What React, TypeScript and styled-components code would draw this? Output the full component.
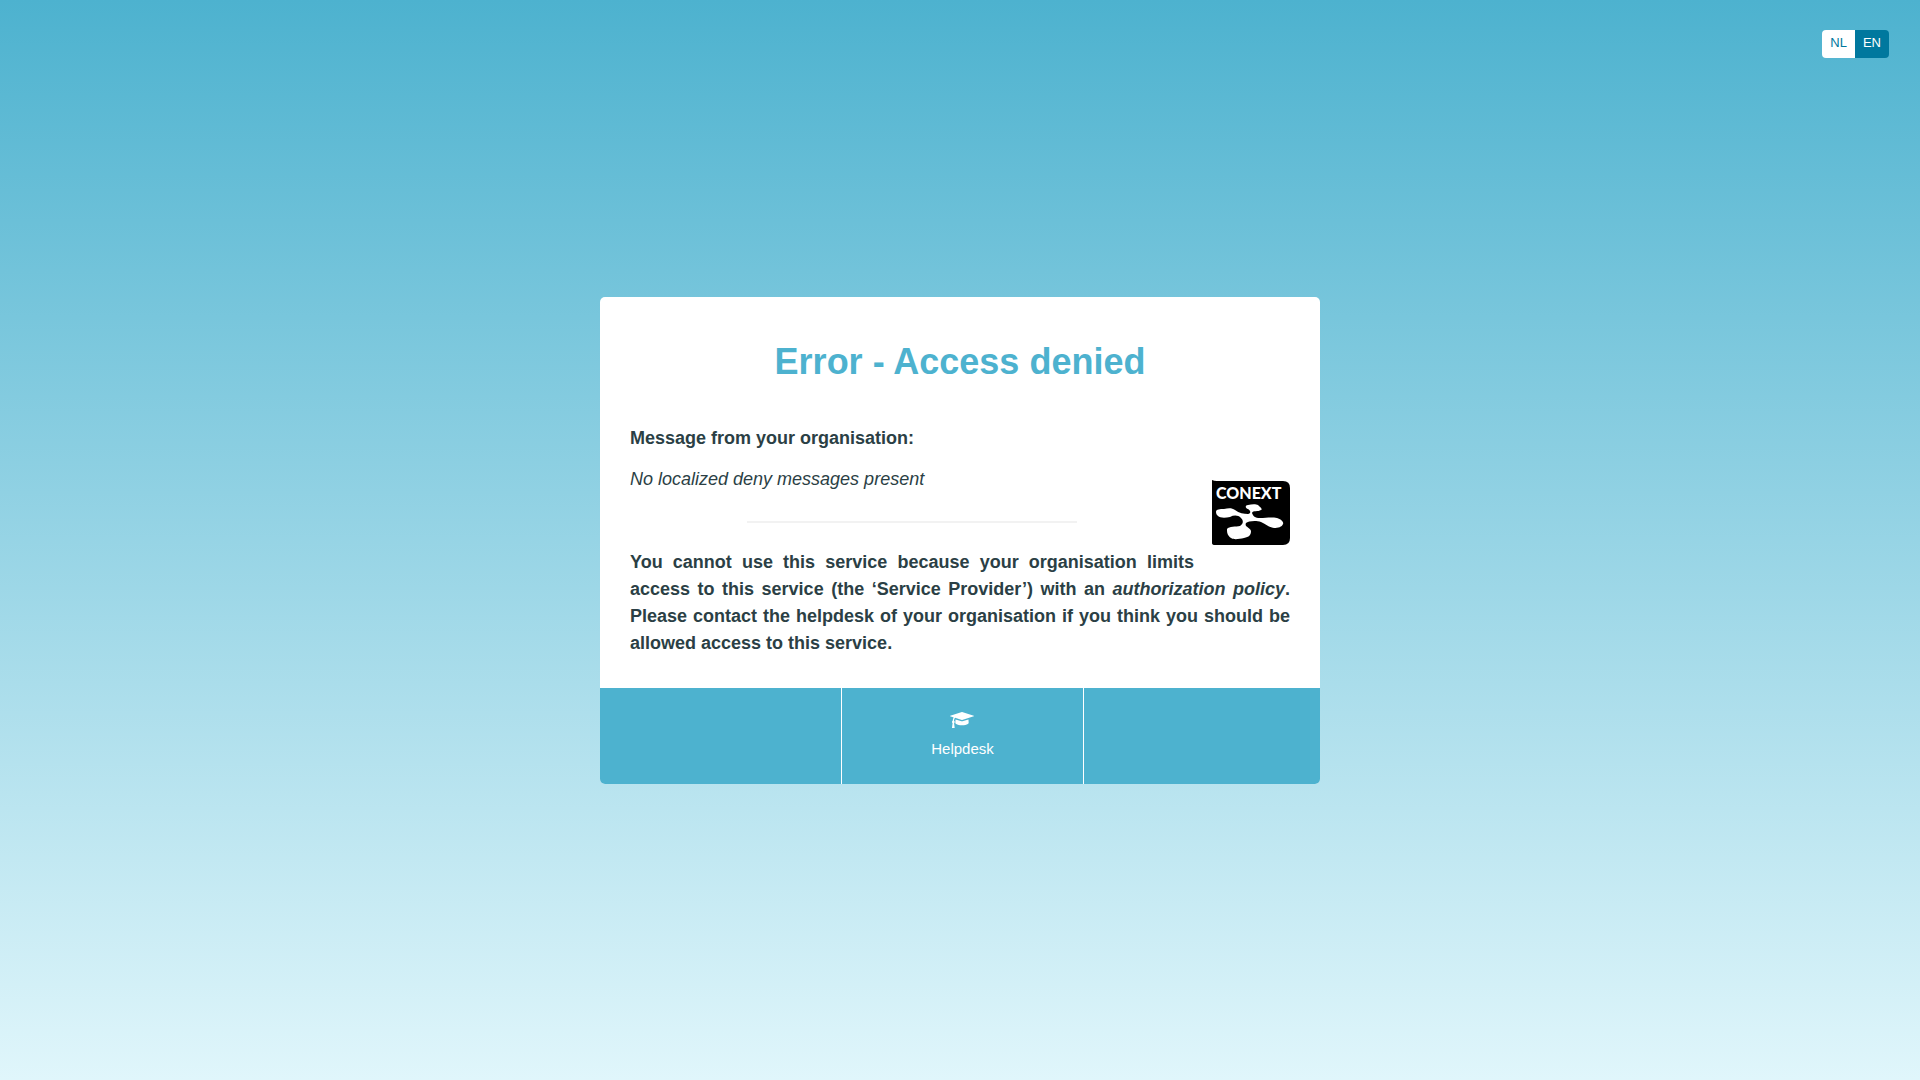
import React from 'react';
import styled, { createGlobalStyle } from 'styled-components';

const GlobalStyle = createGlobalStyle`
  *, *::before, *::after { box-sizing: border-box; }
  body {
    margin: 0;
    color: #2b3f45;
    font-family: Helvetica, "Liberation Sans", Arial, sans-serif;
    font-size: 18px;
    line-height: 27px;
  }
`;

const Page = styled.div`
  display: grid;
  grid-template-rows: 1fr auto 1fr;
  min-height: 100vh;
  background: linear-gradient(to bottom, #4db2cf 0%, #e0f6fb 100%);
`;

const LanguageBar = styled.nav`
  display: flex;
  justify-content: flex-end;
  align-items: flex-start;
  padding: 30px 31px;
`;

const LanguageList = styled.div`
  display: flex;
  overflow: hidden;
  border-radius: 4px;
`;

const LanguageLink = styled.a<{ $active?: boolean }>`
  padding: 0 8px 2px;
  font-size: 13px;
  line-height: 26px;
  text-decoration: none;
  color: ${(p) => (p.$active ? '#fff' : '#00789e')};
  background: ${(p) => (p.$active ? '#00789e' : '#fff')};
`;

const Card = styled.main`
  width: 100%;
  max-width: 720px;
  margin: 0 auto;
  overflow: hidden;
  border-radius: 5px;
  background: #fff;
`;

const Content = styled.div`
  padding: 38px 30px 31px;
`;

const Title = styled.h1`
  margin: 0 0 36px;
  font-size: 36px;
  line-height: 54px;
  text-align: center;
  color: #4db2cf;
`;

const Subtitle = styled.h2`
  margin: 0 0 14px;
  font-size: 18px;
`;

const Logo = styled.svg`
  float: right;
  width: 78px;
  height: 65px;
  margin: 14px 0 18px 18px;
`;

const Message = styled.p`
  margin: 0 0 28px;
  font-style: italic;
`;

const Divider = styled.hr`
  width: 50%;
  height: 2px;
  margin: 0 auto 26px;
  border: 0;
  overflow: hidden;
  background: #f2f2f2;
`;

const Explanation = styled.p`
  margin: 0;
  font-weight: bold;
  text-align: justify;
`;

const Footer = styled.footer`
  display: grid;
  grid-template-columns: 242fr 242fr 236fr;
  min-height: 96px;
  background: #4db2cf;
`;

const FooterCell = styled.div`
  display: flex;
  justify-content: center;

  &:not(:last-child) { border-right: 1px solid #fff; }
`;

const HelpLink = styled.a`
  display: flex;
  flex-direction: column;
  align-items: center;
  gap: 8px;
  padding-top: 24px;
  font-size: 15px;
  line-height: 24px;
  text-decoration: none;
  color: #fff;
`;

const CapIcon = styled.svg`
  width: 24px;
  height: 17px;
  fill: currentColor;
`;

const LogoText = styled.text`
  font-family: Lato, sans-serif;
  font-size: 16px;
  font-weight: 900;
  fill: #fff;
`;

function ConextLogo() {
  return (
    <Logo viewBox="0 0 78 65" role="img" aria-label="Conext">
      <path d="M0 0Q2 1 5 1H71Q78 1 78 8V58Q78 65 71 65H3Q0 65 0 63Z" fill="#000" />
      <LogoText x="4" y="19">CONEXT</LogoText>
      <path
        d="M4 32C4 29 8 29 12 29C17 28 20 28 23 30C27 33 32 34 36 34C39 33 39 31 36 29C33 28 33 25 36 25C40 24 44 24 46 25C48 27 51 29 49 30C46 32 41 30 40 33C41 36 43 38 48 38C54 38 59 37 65 38C69 39 72 42 71 44C70 47 66 48 62 48C56 47 54 44 49 42C44 40 36 41 34 43C32 47 38 47 39 51C39 55 37 57 32 58C27 59 22 60 19 58C15 55 15 52 15 49C17 46 24 47 28 46C31 44 32 41 29 38C26 35 22 35 18 37C13 38 8 38 6 36C5 35 4 34 4 32Z"
        fill="#fff"
      />
    </Logo>
  );
}

function GraduationCap() {
  return (
    <CapIcon viewBox="0 128 2304 1632" aria-hidden="true">
      <path d="M1774 836l18 316q4 69-82 128t-235 93.5-323 34.5-323-34.5-235-93.5-82-128l18-316 574 181q22 7 48 7t48-7zm530-324q0 23-22 31l-1120 352q-4 1-10 1t-10-1l-652-206q-43 34-71 111.5t-34 178.5q63 36 63 109 0 69-58 107l58 433q2 14-8 25-9 11-24 11h-192q-15 0-24-11-10-11-8-25l58-433q-58-38-58-107 0-73 65-111 11-207 98-330l-333-104q-22-8-22-31t22-31l1120-352q4-1 10-1t10 1l1120 352q22 8 22 31z" />
    </CapIcon>
  );
}

export default function App() {
  return (
    <>
      <GlobalStyle />
      <Page>
        <LanguageBar aria-label="Language">
          <LanguageList>
            <LanguageLink href="#nl" lang="nl">NL</LanguageLink>
            <LanguageLink href="#en" lang="en" $active aria-current="true">EN</LanguageLink>
          </LanguageList>
        </LanguageBar>
        <Card>
          <Content>
            <Title>Error - Access denied</Title>
            <Subtitle>Message from your organisation:</Subtitle>
            <ConextLogo />
            <Message>No localized deny messages present</Message>
            <Divider />
            <Explanation>
              You cannot use this service because your organisation limits access to this service
              (the ‘Service Provider’) with an <em>authorization policy</em>. Please contact the
              helpdesk of your organisation if you think you should be allowed access to this service.
            </Explanation>
          </Content>
          <Footer>
            <FooterCell />
            <FooterCell>
              <HelpLink href="#helpdesk">
                <GraduationCap />
                Helpdesk
              </HelpLink>
            </FooterCell>
            <FooterCell />
          </Footer>
        </Card>
      </Page>
    </>
  );
}
